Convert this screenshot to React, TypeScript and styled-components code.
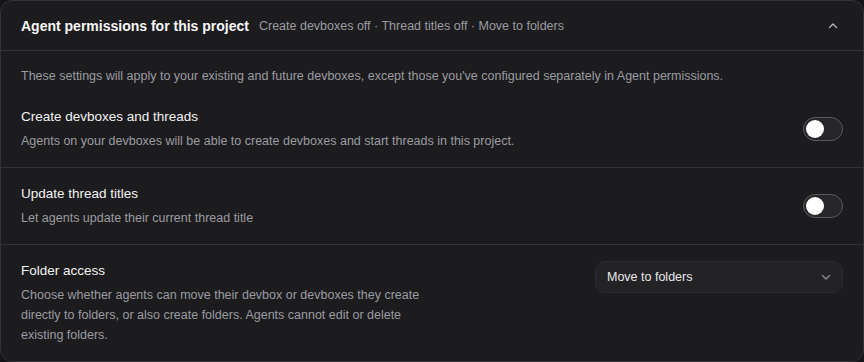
import React, { useState } from 'react';
import styled, { createGlobalStyle } from 'styled-components';

const Global = createGlobalStyle`
  html, body { margin: 0; padding: 0; background: #141416; }
  body { font-family: 'Liberation Sans', Arial, sans-serif; -webkit-font-smoothing: antialiased; }
  * { box-sizing: border-box; }
`;

/* ─── Styled ─────────────────────────────────────────────────────────────── */
const Card = styled.section`
  width: 864px;
  height: 362px;
  background: #1c1c1e;
  border: 1px solid #333336;
  border-radius: 12px;
  overflow: hidden;
  display: flex;
  flex-direction: column;
`;

const Header = styled.header`
  height: 50px;
  flex-shrink: 0;
  display: flex;
  align-items: center;
  padding: 0 20px;
  gap: 10px;
  border-bottom: 1px solid #333336;
`;

const Title = styled.h2`
  margin: 0;
  font-size: 14px;
  font-weight: 700;
  color: #f7f7f8;
`;

const Summary = styled.span`
  font-size: 12.5px;
  color: #9b9ba1;
  flex: 1;
`;

const CollapseBtn = styled.button`
  background: none;
  border: none;
  padding: 0;
  width: 16px;
  height: 16px;
  display: flex;
  align-items: center;
  justify-content: center;
  color: #b0b0b6;
  cursor: pointer;
  margin-right: 2px;
`;

const Intro = styled.p`
  margin: 0;
  padding: 15px 20px 5px;
  font-size: 12.5px;
  line-height: 20px;
  color: #9b9ba1;
`;

const Row = styled.div<{ last?: boolean }>`
  display: flex;
  justify-content: space-between;
  gap: 24px;
  padding: 16px 20px 16px;
  border-bottom: ${({ last }) => (last ? 'none' : '1px solid #333336')};
  align-items: ${({ last }) => (last ? 'flex-start' : 'center')};
`;

const RowText = styled.div<{ narrow?: boolean }>`
  display: flex;
  flex-direction: column;
  gap: 4px;
  max-width: ${({ narrow }) => (narrow ? '420px' : 'none')};
`;

const RowTitle = styled.div`
  font-size: 13.5px;
  line-height: 20px;
  color: #f2f2f3;
`;

const RowDesc = styled.div`
  font-size: 12.5px;
  line-height: 20px;
  color: #9b9ba1;
`;

const Toggle = styled.button<{ on: boolean }>`
  width: 40px;
  height: 24px;
  flex-shrink: 0;
  border-radius: 12px;
  border: 1px solid #5a5a5e;
  background: ${({ on }) => (on ? '#4a7dff' : '#262628')};
  padding: 0 2px;
  display: flex;
  align-items: center;
  justify-content: ${({ on }) => (on ? 'flex-end' : 'flex-start')};
  cursor: pointer;
`;

const Knob = styled.span`
  width: 18px;
  height: 18px;
  border-radius: 50%;
  background: #ffffff;
`;

const Select = styled.button`
  width: 248px;
  height: 32px;
  flex-shrink: 0;
  border-radius: 10px;
  border: 1px solid #2c2c2f;
  background: #232326;
  color: #e8e8ea;
  font-family: inherit;
  font-size: 12.5px;
  padding: 0 10px 0 11px;
  display: flex;
  align-items: center;
  justify-content: space-between;
  cursor: pointer;
`;

const ChevronWrap = styled.span`
  display: flex;
  color: #8a8a90;
`;

const Chevron = ({ up }: { up?: boolean }) => (
  <svg width="12" height="12" viewBox="0 0 12 12" fill="none" stroke="currentColor" strokeWidth="1.4" strokeLinecap="round" strokeLinejoin="round">
    {up ? <path d="M2.5 7.5 6 4l3.5 3.5" /> : <path d="M2.5 4.5 6 8l3.5-3.5" />}
  </svg>
);

export default function App() {
  const [create, setCreate] = useState(false);
  const [titles, setTitles] = useState(false);

  return (
    <>
      <Global />
      <Card>
        <Header>
          <Title>Agent permissions for this project</Title>
          <Summary>Create devboxes off · Thread titles off · Move to folders</Summary>
          <CollapseBtn aria-label="Collapse"><Chevron up /></CollapseBtn>
        </Header>

        <Intro>
          These settings will apply to your existing and future devboxes, except those you've configured separately in Agent permissions.
        </Intro>

        <Row>
          <RowText>
            <RowTitle>Create devboxes and threads</RowTitle>
            <RowDesc>Agents on your devboxes will be able to create devboxes and start threads in this project.</RowDesc>
          </RowText>
          <Toggle on={create} onClick={() => setCreate(v => !v)}><Knob /></Toggle>
        </Row>

        <Row>
          <RowText>
            <RowTitle>Update thread titles</RowTitle>
            <RowDesc>Let agents update their current thread title</RowDesc>
          </RowText>
          <Toggle on={titles} onClick={() => setTitles(v => !v)}><Knob /></Toggle>
        </Row>

        <Row last>
          <RowText narrow>
            <RowTitle>Folder access</RowTitle>
            <RowDesc>
              Choose whether agents can move their devbox or devboxes they create directly to folders, or also create folders. Agents cannot edit or delete existing folders.
            </RowDesc>
          </RowText>
          <Select>
            Move to folders
            <ChevronWrap><Chevron /></ChevronWrap>
          </Select>
        </Row>
      </Card>
    </>
  );
}
